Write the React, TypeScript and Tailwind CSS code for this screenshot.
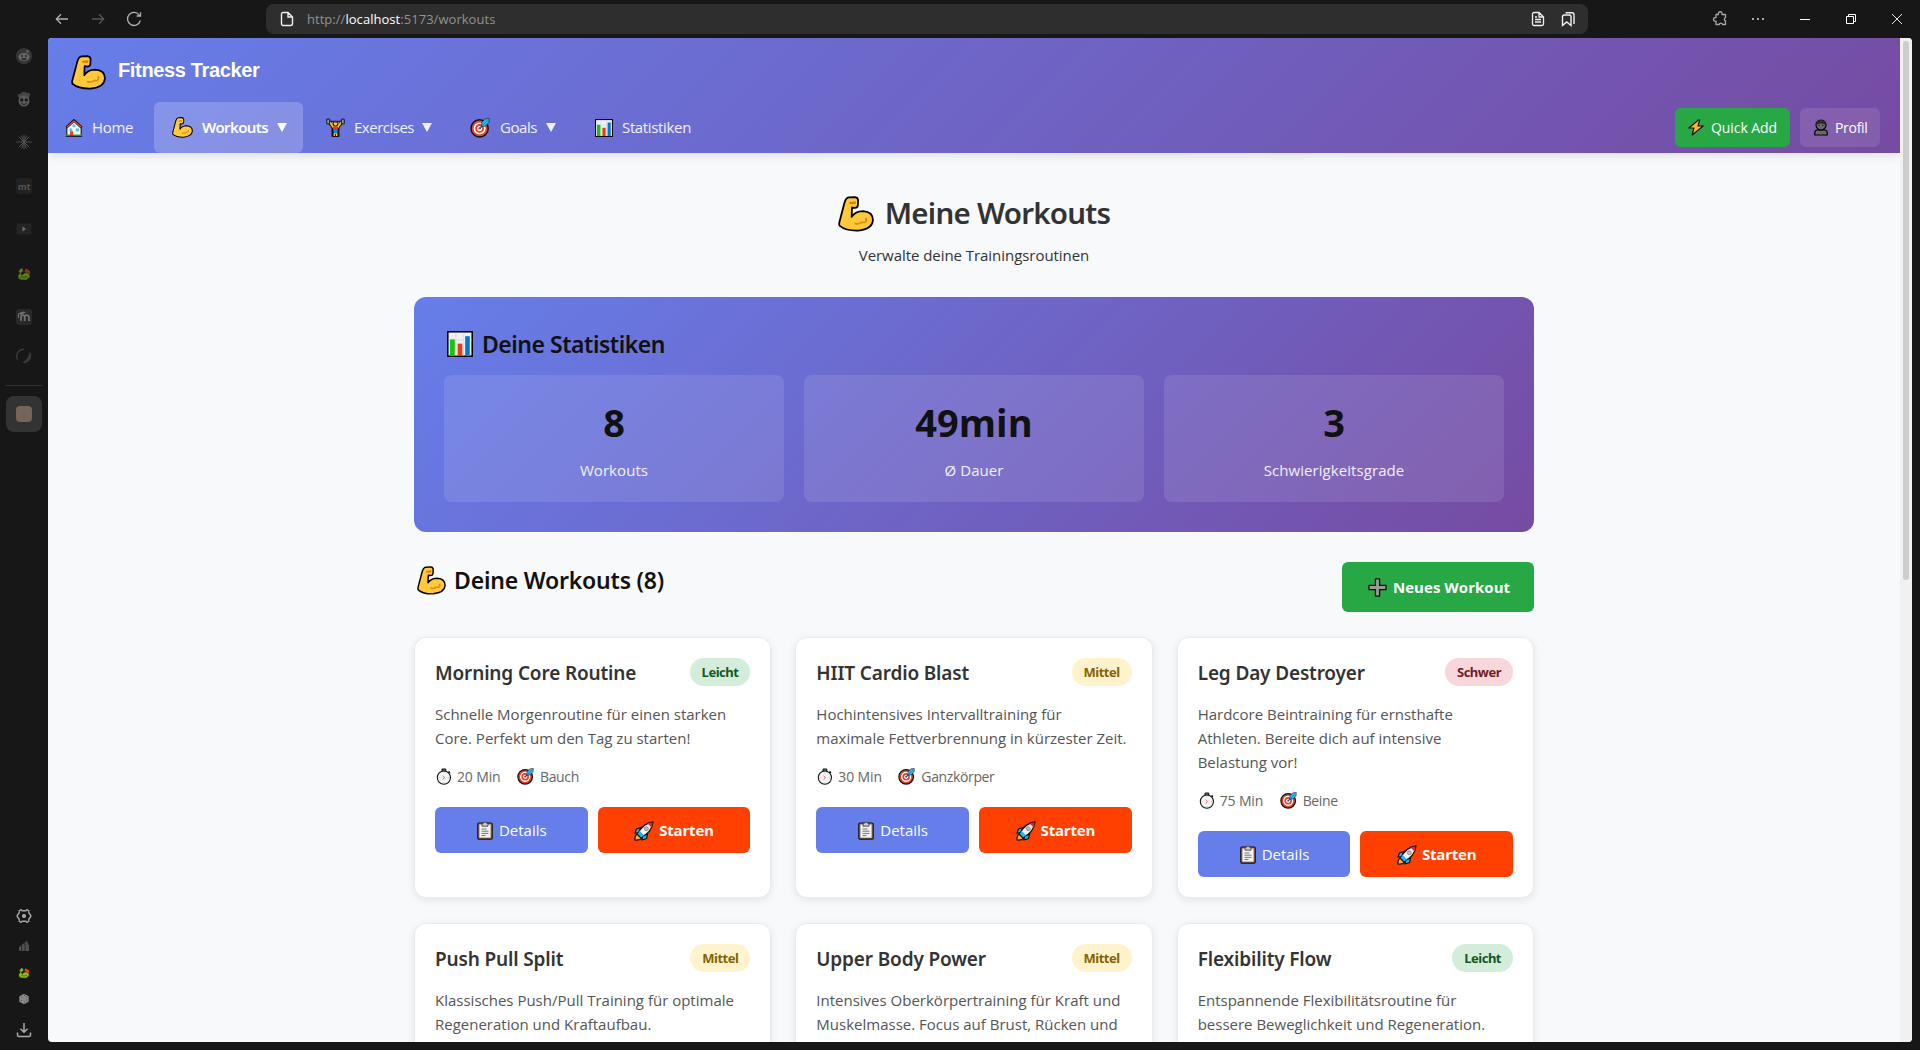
import type { ReactNode } from "react";

type IconProps = { className?: string };

const Arm = ({ className = "" }: IconProps) => (
  <svg viewBox="0 0 100 100" className={className}>
    <path d="M30 4 L47 3 Q56 4 56 13 L55 27 Q54 33 47 33 L39 32 L38 58 Q48 42 70 42 Q97 44 97 67 Q95 92 56 96 Q22 97 5 83 Q2 80 4 72 L18 19 Q22 5 30 4Z" fill="#ffc83d" stroke="#000" strokeWidth="5" strokeLinejoin="round" />
    <path d="M31 17 L50 15 L49 22 L33 22Z" fill="#d67d00" />
    <path d="M46 76 Q58 80 66 73 L75 73 Q81 69 77 61" fill="none" stroke="#e08f0a" strokeWidth="5" />
  </svg>
);

const House = ({ className = "" }: IconProps) => (
  <svg viewBox="0 0 20 20" className={className}>
    <path d="M2 18.5V9L10 1.5 18 9v9.5z" fill="#f5f5f5" stroke="#111" strokeWidth="1.2" />
    <path d="M1.5 9.500 10 1.800l8.500 7.700" fill="none" stroke="#111" strokeWidth="3" />
    <path d="M2 9.200 10 2.200l8 7" fill="none" stroke="#e8503a" strokeWidth="1.400" />
    <path d="M8.500 6h3v3h-3zM5 10.500h3v3H5zM12 10.500h3.500v3H12z" fill="#4cc2f1" />
    <path d="M5.500 13.500h3.500v5H5.500z" fill="#e8402a" />
    <path d="M1 17.200h4.500v1.800H1zM9 17.200h10v1.800H9z" fill="#2ba62b" />
    <path d="M.8 19.300h18.400" stroke="#111" strokeWidth="1" />
  </svg>
);

const Lifter = ({ className = "" }: IconProps) => (
  <svg viewBox="0 0 20 20" className={className}>
    <path d="M3 3.500h14" stroke="#222" strokeWidth="1.200" />
    <path d="M4 5 7.500 10v8.500h5V10L16 5" fill="#ffc83d" stroke="#111" strokeWidth="3.400" strokeLinejoin="round" />
    <path d="M4 4.500 8 10h4l4-5.500" fill="none" stroke="#ffc83d" strokeWidth="2" />
    <path d="M.8 1.200h3v5h-3zM16.200 1.200h3v5h-3z" fill="#8d99a3" stroke="#111" strokeWidth="1" />
    <path d="M7.200 9h5.600l-.8 5H8z" fill="#e8352a" />
    <path d="M8 12.500h4V16H8z" fill="#1783d6" />
    <path d="M8 16h1.500v3H8zM10.500 16H12v3h-1.500z" fill="#ffc83d" />
    <circle cx="10" cy="6" r="2.400" fill="#ffc83d" stroke="#111" strokeWidth="1" />
    <path d="M7.800 5q2.200-3 4.400 0z" fill="#8a4a1c" />
  </svg>
);

const Target = ({ className = "" }: IconProps) => (
  <svg viewBox="0 0 20 20" className={className}>
    <circle cx="9.600" cy="10.400" r="8.600" fill="#e8412a" stroke="#111" strokeWidth="1.400" />
    <circle cx="9.600" cy="10.400" r="6" fill="#fff" />
    <circle cx="9.600" cy="10.400" r="4.400" fill="#e8412a" />
    <circle cx="9.600" cy="10.400" r="2.500" fill="#fff" />
    <circle cx="9.600" cy="10.400" r="1.200" fill="#e8412a" />
    <path d="m9.600 10.400 4-4" stroke="#0f5a96" strokeWidth="1.400" />
    <path d="m11.500 8.500.3-4.300L15.500.8l3.700-.2-.2 3.700-3.700 3.900z" fill="#2cb8ee" stroke="#111" strokeWidth=".6" />
    <path d="m12 8 5.500-5.500" stroke="#0f76bd" strokeWidth=".8" />
  </svg>
);

const Chart = ({ className = "" }: IconProps) => (
  <svg viewBox="0 0 20 20" className={className}>
    <rect x=".6" y=".6" width="18.800" height="18.800" fill="#f0f0f2" stroke="#000" strokeWidth="1.200" />
    <path d="M6.800 1.400v17.400M12.800 1.400v17.400M1.400 7h17.400" stroke="#dcdce2" strokeWidth=".8" />
    <path d="M2.200 6.500h3.800v12.300H2.200z" fill="#16c60c" />
    <path d="M8.200 9.700h3.600v9.100H8.200z" fill="#f03a17" />
    <path d="M14 4h3.500v14.800H14z" fill="#0078d7" />
  </svg>
);

const Bolt = ({ className = "" }: IconProps) => (
  <svg viewBox="0 0 16 17" className={className}>
    <path d="M10.500 1 .9 9h5L4.200 16l11-9H10l1.700-6z" fill="#ffb52e" stroke="#111" strokeWidth="1.200" strokeLinejoin="round" />
  </svg>
);

const Person = ({ className = "" }: IconProps) => (
  <svg viewBox="0 0 14 17" className={className}>
    <path d="M.8 16v-2.500q0-2.200 2.500-2.500h7.400q2.500.3 2.500 2.500V16z" fill="#6b6b6b" stroke="#000" strokeWidth="1.200" />
    <circle cx="7" cy="6" r="5" fill="#6b6b6b" stroke="#000" strokeWidth="1.200" />
    <path d="M2 6Q2 1 7 1t5 5Q7 3 2 6z" fill="#2b2b2b" />
    <path d="M4.500 6.500h1.500M8 6.500h1.500" stroke="#222" strokeWidth=".9" />
  </svg>
);

const Plus = ({ className = "" }: IconProps) => (
  <svg viewBox="0 0 20 20" className={className}>
    <path d="M7.800 1h4.400v6.800H19v4.400h-6.800V19H7.800v-6.800H1V7.800h6.800z" fill="#9b9b9b" stroke="#111" strokeWidth="1.400" strokeLinejoin="round" />
  </svg>
);

const Clipboard = ({ className = "" }: IconProps) => (
  <svg viewBox="0 0 16 19" className={className}>
    <rect x=".8" y="2" width="14.400" height="16.200" rx="1.200" fill="#a07a5a" stroke="#111" strokeWidth="1.200" />
    <path d="M2.500 3.600h11v13h-11z" fill="#f3f3f3" />
    <path d="M5 2.200h1.500Q8-.8 9.500 2.200H11v3H5z" fill="#c9c9c9" stroke="#333" strokeWidth=".8" />
    <path d="M4.500 8h5M4.500 10.200h7M4.500 12.400h7M4.500 14.500h4" stroke="#666" strokeWidth=".9" />
  </svg>
);

const Rocket = ({ className = "" }: IconProps) => (
  <svg viewBox="0 0 20 20" className={className}>
    <path d="M1 19q-.5-4 2-6l4.500 4.500q-2 2-6.500 1.500z" fill="#ffab2e" stroke="#111" strokeWidth="1.200" />
    <path d="M7 6.500 2.500 8 1 12l4-.5zM13.500 13 12.500 17.500 8 19l.5-4z" fill="#22b4f0" stroke="#111" strokeWidth="1.200" />
    <path d="M3.800 13Q8 2.500 19 1 17.500 12 7 16.200z" fill="#f2f2f2" stroke="#111" strokeWidth="1.300" strokeLinejoin="round" />
    <path d="M13.600 2.600Q16 1.500 18.500 1.500 18.400 4 17.400 6.400z" fill="#e0262e" />
    <path d="m3.800 13 1.700-3.200 4.700 4.700L7 16.200z" fill="#22b4f0" />
    <circle cx="12.300" cy="7.700" r="2" fill="#b9bec4" stroke="#777" strokeWidth=".7" />
  </svg>
);

const Stopwatch = ({ className = "" }: IconProps) => (
  <svg viewBox="0 0 16 17" className={className}>
    <path d="M6 1h3.800v3H6z" fill="#777" stroke="#111" strokeWidth="1" />
    <path d="m12.500 3.500 1.400 1.400" stroke="#111" strokeWidth="1.600" />
    <circle cx="7.900" cy="9.600" r="6.600" fill="#f3f3f3" stroke="#111" strokeWidth="1.100" />
    <path d="m6.600 7.800 2 1.900-2 1.900" fill="none" stroke="#e0555a" strokeWidth=".9" />
    <path d="M7.900 4.500v1M7.900 13.900v1M3 9.700h1M12 9.700h1" stroke="#bbb" strokeWidth=".8" />
  </svg>
);

const Dragon = ({ className = "" }: IconProps) => (
  <svg viewBox="0 0 14 14" className={className}>
    <path d="m7.500 5 1-3.500 2 .8 2.700 2.200-.4 3.500-3-1z" fill="#e0421a" />
    <path d="M1.300 4.200 3 2.200l1-1.200 2 .8.300 2.800-1.800.8-.6 1.800 1.100.7L7.500 6l2.200-.3 2.500 1.500 1 2.300-1.400 1.800L9.500 13 4 12.900 1.300 11.600.8 8.800 2 7.400l.7-2.200z" fill="#8dbf1e" stroke="#1e2c08" strokeWidth=".6" />
    <path d="m3.500 10.800 1.700-1.300 1.800 1.500L9 9.300l1.800 1" fill="none" stroke="#2d4a0c" strokeWidth=".8" />
  </svg>
);

function TopBar() {
  return (
    <div className="flex h-[38px] shrink-0 items-center text-[#b8b8b8]">
      <svg viewBox="0 0 14 12" className="ml-[55px] h-3 w-3.5" fill="none" stroke="#b0b0b0" strokeWidth="1.300">
        <path d="M13 6H1.500M6 1.300 1.300 6 6 10.700" />
      </svg>
      <svg viewBox="0 0 14 12" className="ml-[22px] h-3 w-3.5" fill="none" stroke="#575757" strokeWidth="1.300">
        <path d="M1 6h11.500M8 1.300 12.700 6 8 10.700" />
      </svg>
      <svg viewBox="0 0 16 16" className="ml-[21px] h-4 w-4" fill="none" stroke="#b0b0b0" strokeWidth="1.300">
        <path d="M14.300 9.500A6.500 6.500 0 1 1 13.500 4.500M14.500 1.200v3.800h-3.900" />
      </svg>
      <div className="ml-[124px] flex h-[30px] w-[1322px] items-center rounded-lg bg-[#2e2e2e]">
        <svg viewBox="0 0 14 16" className="ml-3.5 h-4 w-3.5" fill="none" stroke="#f0f0f0" strokeWidth="1.400">
          <path d="M3 1.500h5L12.500 6v6.500a2 2 0 0 1-2 2H3a1.500 1.500 0 0 1-1.500-1.500V3A1.500 1.500 0 0 1 3 1.500zM8 1.500V6h4.500" />
        </svg>
        <span className="mt-0.5 ml-[13px] text-[13px] tracking-[0.04px] whitespace-nowrap text-[#929292]">
          http://<span className="text-white">localhost</span>:5173/workouts
        </span>
        <svg viewBox="0 0 14 16" className="ml-auto h-4 w-3.5" fill="none" stroke="#f0f0f0" strokeWidth="1.300">
          <path d="M3 1.500h5L12.500 6v7a1.500 1.500 0 0 1-1.500 1.500H3A1.500 1.500 0 0 1 1.500 13V3A1.500 1.500 0 0 1 3 1.500zM8 1.500V6h4.500M4 6h2M4 8.500h6M4 11h6" />
        </svg>
        <svg viewBox="0 0 15 16" className="mr-3 ml-4 h-4 w-[15px]" fill="none" stroke="#f0f0f0" strokeWidth="1.400">
          <path d="M1.500 14.500v-9A1.500 1.500 0 0 1 3 4h5.500A1.500 1.500 0 0 1 10 5.500v9L5.700 11zM4.500 1.700H11A2 2 0 0 1 13 3.700v9.300" />
        </svg>
      </div>
      <svg viewBox="0 0 16 16" className="ml-[124px] h-4 w-4" fill="none" stroke="#a8a8a8" strokeWidth="1.300" strokeLinejoin="round">
        <path d="M4 3.500H6.500a1.900 1.900 0 1 1 3.400 0H13.500v3.200a1.600 1.600 0 0 0 0 3.100v3.700h-3a1.700 1.700 0 0 0-3.300 0H4V10.200a1.900 1.900 0 1 1 0-3.600z" />
      </svg>
      <div className="ml-6 flex gap-[3px]">
        <i className="size-0.5 bg-[#a8a8a8]" />
        <i className="size-0.5 bg-[#a8a8a8]" />
        <i className="size-0.5 bg-[#a8a8a8]" />
      </div>
      <div className="ml-9 h-px w-2.5 bg-white" />
      <svg viewBox="0 0 10 10" className="ml-9 size-2.5" fill="none" stroke="#fff" strokeWidth="1">
        <path d="M.5 2.500h7v7h-7zM2.500 2.500v-2h7v7h-2" />
      </svg>
      <svg viewBox="0 0 10 10" className="ml-9 size-2.5" fill="none" stroke="#fff" strokeWidth=".9">
        <path d="m0 0 10 10M10 0 0 10" />
      </svg>
    </div>
  );
}

const Cell = ({ children, className = "" }: { children: ReactNode; className?: string }) => (
  <div className={`flex h-9 w-9 shrink-0 items-center justify-center ${className}`}>{children}</div>
);

function SideBar() {
  return (
    <div className="flex w-12 shrink-0 flex-col items-center pb-px">
      <Cell>
        <svg viewBox="0 0 16 16" className="size-4">
          <circle cx="8" cy="8" r="8" fill="#363636" />
          <circle cx="11.500" cy="3.500" r="1.300" fill="#686868" />
          <ellipse cx="8" cy="9" rx="5.500" ry="4" fill="#686868" />
          <path d="M5 8h2M9 8h2M5.500 10.500q2.500 2 5 0" stroke="#222" strokeWidth="1.300" />
        </svg>
      </Cell>
      <Cell className="mt-[7px]">
        <svg viewBox="0 0 16 16" className="size-4">
          <path d="M3 7Q0 3 4 3q3-4 7-1 5-1 2 5z" fill="#454545" />
          <circle cx="8" cy="10" r="5.500" fill="#5c5c5c" />
          <circle cx="5.700" cy="9" r="1.700" fill="#1b1b1b" />
          <circle cx="10.300" cy="9" r="1.700" fill="#1b1b1b" />
          <path d="M5.500 12.500q2.500 2 5 0" stroke="#1b1b1b" fill="none" />
        </svg>
      </Cell>
      <Cell className="mt-[7px]">
        <svg viewBox="0 0 16 16" className="size-4" stroke="#505050" strokeWidth="1">
          <path d="M8 .5v15M.5 8h15M2.700 2.700l10.600 10.600M13.300 2.700 2.700 13.300M5.500 1.500l5 13M10.500 1.500l-5 13" />
        </svg>
      </Cell>
      <Cell className="mt-[8px]">
        <div className="flex size-4 items-center justify-center rounded-[3px] bg-[#222] text-[9px] leading-none font-bold text-[#555]">mt</div>
      </Cell>
      <Cell className="mt-[7px]">
        <svg viewBox="0 0 16 12" className="h-3 w-4">
          <rect x=".5" y=".5" width="15" height="11" rx="2" fill="#242424" />
          <path d="M6.500 3.500 10 6 6.500 8.500z" fill="#707070" />
        </svg>
      </Cell>
      <Cell className="mt-[9px]">
        <Dragon className="size-3.5 opacity-60" />
      </Cell>
      <Cell className="mt-[7px]">
        <svg viewBox="0 0 16 16" className="size-4" fill="none">
          <rect width="16" height="16" rx="3" fill="#292929" />
          <path d="M5 12V8q0-1.800 1.800-1.800T8.700 8v4M8.700 8q0-1.800 2-1.800T13 8v4" stroke="#727272" strokeWidth="1.700" />
          <path d="M1.500 4.800 7 2.500l3 .8-4.500 2.500zM2 5h1v4H2z" fill="#727272" />
        </svg>
      </Cell>
      <Cell className="mt-[3px]">
        <svg viewBox="0 0 16 16" className="size-4">
          <path d="M1.500 11.500A7 7 0 0 1 8 1.300" stroke="#3a3a3a" strokeWidth="1.500" fill="none" />
          <path d="M14 3.500Q17 9 12.500 13.500 9.500 16 6.500 14.700 12 11.500 14 3.500z" fill="#3a3a3a" />
        </svg>
      </Cell>
      <div className="mt-[11px] h-px w-9 shrink-0 bg-[#333]" />
      <Cell className="mt-2.5 rounded-lg bg-[#333]">
        <div className="size-4 rounded bg-[#776459]" />
      </Cell>
      <svg viewBox="0 0 16 16" className="mt-auto size-4 shrink-0" fill="none" stroke="#a8a8a8" strokeWidth="1.400" strokeLinejoin="round">
        <path d="M4.800 1.700 6.500 2.800h3L11.200 1.700l1.500 1.100.2 2.200 1.900 2.500v1l-1.900 2.500-.2 2.200-1.500 1.100-1.700-1.100h-3l-1.700 1.100-1.500-1.100-.2-2.200L1.200 8.500v-1l1.900-2.500.2-2.200z" />
        <circle cx="8" cy="8" r="1.400" fill="#a8a8a8" />
      </svg>
      <svg viewBox="0 0 12 12" className="mt-4 size-3 shrink-0">
        <path d="M1 11V7l2-1.500v5.500zM3.700 11V5l3-2.500V11zM7.400 11V1l2.200 1 1.400 4v5z" fill="#505050" />
      </svg>
      <Dragon className="mt-[15px] size-3 shrink-0" />
      <svg viewBox="0 0 12 12" className="mt-3.5 size-3 shrink-0">
        <path d="m6 .8 4.700 2.500v5.400L6 11.200 1.300 8.700V3.300z" fill="#888" />
        <path d="M3.500 4h.8M6 2.500h.8M8 4h.8M3 7.500h.8M8.500 7h.8M6 9h.8" stroke="#3c3c3c" strokeWidth=".9" />
      </svg>
      <svg viewBox="0 0 16 16" className="mt-[17px] mb-[11px] size-4 shrink-0" fill="none" stroke="#a8a8a8" strokeWidth="1.500">
        <path d="M8 1v9M4.500 6.800 8 10.300l3.500-3.500M1.500 10.500V13A1.500 1.500 0 0 0 3 14.500h10a1.500 1.500 0 0 0 1.500-1.500v-2.500" />
      </svg>
    </div>
  );
}

const Caret = () => <i className="h-[9px] w-2.5 bg-current [clip-path:polygon(0_0,100%_0,50%_100%)]" />;

function Header() {
  return (
    <header className="relative z-10 h-[115px] shrink-0 bg-[linear-gradient(135deg,#667eea_0%,#764ba2_100%)] text-[15px] whitespace-nowrap text-white/90 shadow-[0_2px_10px_rgba(0,0,0,0.12)]">
      <div className="flex h-16 items-center pt-0.5 pl-[23px]">
        <Arm className="mt-0.5 size-[35px]" />
        <span className="mb-[3px] ml-3 font-['Liberation_Sans',sans-serif] text-[20px] font-bold tracking-[-0.35px] text-white">Fitness Tracker</span>
      </div>
      <nav className="flex h-[51px] items-center">
        <House className="ml-[17px] size-[18px]" />
        <span className="ml-[9px] w-[41px] tracking-[-0.35px]">Home</span>
        <div className="ml-[21px] flex h-full w-[149px] items-center rounded-md bg-white/20 pl-[18px] text-white">
          <Arm className="size-[21px]" />
          <span className="ml-[9px] w-[66px] font-['Noto_Sans',sans-serif] font-semibold tracking-[-0.6px]">Workouts</span>
          <span className="ml-[9px] flex"><Caret /></span>
        </div>
        <Lifter className="ml-[23px] size-[19px]" />
        <span className="ml-[9px] w-[60px] tracking-[-0.49px]">Exercises</span>
        <span className="ml-2 flex"><Caret /></span>
        <Target className="ml-[38px] size-5" />
        <span className="ml-[10px] w-[37px] tracking-[-0.44px]">Goals</span>
        <span className="ml-[9px] flex"><Caret /></span>
        <Chart className="ml-[39px] size-[18px]" />
        <span className="ml-[9px] tracking-[-0.35px]">Statistiken</span>
        <div className="ml-auto flex h-[39px] w-[115px] items-center rounded-md bg-[#28a745] pl-[13px] text-sm text-white">
          <Bolt className="h-[17px] w-4" />
          <span className="ml-[7px] tracking-[-0.08px]">Quick Add</span>
        </div>
        <div className="mr-5 ml-2.5 flex h-[39px] w-20 items-center rounded-md bg-white/10 pl-3.5 text-sm text-white">
          <Person className="h-[17px] w-3.5" />
          <span className="ml-[7px] tracking-[-0.31px]">Profil</span>
        </div>
      </nav>
    </header>
  );
}

const stats = [
  { value: "8", label: "Workouts" },
  { value: "49min", label: "Ø Dauer" },
  { value: "3", label: "Schwierigkeitsgrade" },
];

function Stats() {
  return (
    <section className="mt-[30px] h-[235px] rounded-xl bg-[linear-gradient(135deg,#667eea_0%,#764ba2_100%)] p-[30px]">
      <h2 className="flex h-[34px] items-center text-[#111]">
        <Chart className="ml-[3px] size-[26px]" />
        <span className="ml-[9px] font-['Noto_Sans',sans-serif] text-[23px] font-semibold tracking-[-0.48px]">Deine Statistiken</span>
      </h2>
      <div className="mt-3.5 grid grid-cols-3 gap-5">
        {stats.map((s) => (
          <div key={s.label} className="h-[127px] rounded-lg bg-white/10 pt-5 text-center">
            <div className="h-[55px] text-[38px] leading-[55px] font-bold text-[#111]">{s.value}</div>
            <div className="mt-2 text-[15px] leading-6 tracking-[0.07px] text-white/90">{s.label}</div>
          </div>
        ))}
      </div>
    </section>
  );
}

const badgeStyles = {
  Leicht: "bg-[#d4edda] text-[#155724]",
  Mittel: "bg-[#fff3cd] text-[#856404]",
  Schwer: "bg-[#f8d7da] text-[#721c24]",
};

type Workout = { title: string; level: keyof typeof badgeStyles; lines: string[]; time: string; focus: string };

const workouts: Workout[] = [
  { title: "Morning Core Routine", level: "Leicht", lines: ["Schnelle Morgenroutine für einen starken", "Core. Perfekt um den Tag zu starten!"], time: "20 Min", focus: "Bauch" },
  { title: "HIIT Cardio Blast", level: "Mittel", lines: ["Hochintensives Intervalltraining für", "maximale Fettverbrennung in kürzester Zeit."], time: "30 Min", focus: "Ganzkörper" },
  { title: "Leg Day Destroyer", level: "Schwer", lines: ["Hardcore Beintraining für ernsthafte", "Athleten. Bereite dich auf intensive", "Belastung vor!"], time: "75 Min", focus: "Beine" },
];

const nextWorkouts: Omit<Workout, "time" | "focus">[] = [
  { title: "Push Pull Split", level: "Mittel", lines: ["Klassisches Push/Pull Training für optimale", "Regeneration und Kraftaufbau."] },
  { title: "Upper Body Power", level: "Mittel", lines: ["Intensives Oberkörpertraining für Kraft und", "Muskelmasse. Focus auf Brust, Rücken und"] },
  { title: "Flexibility Flow", level: "Leicht", lines: ["Entspannende Flexibilitätsroutine für", "bessere Beweglichkeit und Regeneration."] },
];

function Card({ title, level, lines, time, focus }: Omit<Workout, "time" | "focus"> & { time?: string; focus?: string }) {
  return (
    <article className="h-[261px] rounded-xl border border-[#e9ecef] bg-white p-5 whitespace-nowrap shadow-[0_2px_8px_rgba(0,0,0,0.09)]">
      <div className="flex h-7 items-center justify-between">
        <h3 className="mt-[3px] font-['Noto_Sans',sans-serif] text-[19px] font-semibold tracking-[-0.15px] text-[#333]">{title}</h3>
        <span className={`flex h-7 items-center rounded-full px-3 pt-px font-['Noto_Sans',sans-serif] text-[13px] font-bold tracking-[-0.5px] ${badgeStyles[level]}`}>{level}</span>
      </div>
      <div className="mt-4 text-[15px] leading-6 text-[#555]">
        {lines.map((l) => (
          <p key={l}>{l}</p>
        ))}
      </div>
      {time && (
        <>
          <div className="mt-4 flex h-[21px] items-center pl-px text-sm text-[#666]">
            <Stopwatch className="h-[17px] w-4" />
            <span className="ml-[5px] w-[44px] tracking-[-0.14px]">{time}</span>
            <Target className="ml-4 size-[17px]" />
            <span className="ml-1.5 tracking-[-0.36px]">{focus}</span>
          </div>
          <div className="mt-5 grid grid-cols-2 gap-2.5 text-[15px] text-white">
            <div className="flex h-[46px] items-center justify-center rounded-md bg-[#667eea] pt-px pl-px">
              <Clipboard className="h-[19px] w-4" />
              <span className="ml-1.5">Details</span>
            </div>
            <div className="flex h-[46px] items-center justify-center rounded-md bg-[#ff4000] pt-px">
              <Rocket className="size-5" />
              <span className="ml-[5px] font-bold tracking-[-0.2px]">Starten</span>
            </div>
          </div>
        </>
      )}
    </article>
  );
}

export default function App() {
  return (
    <div className="flex h-[1050px] w-[1920px] flex-col overflow-hidden bg-[#171717] font-['Open_Sans','Noto_Sans',sans-serif]">
      <TopBar />
      <div className="flex min-h-0 flex-1">
        <SideBar />
        <div className="mb-2 flex w-[1864px] overflow-hidden rounded-[4px] bg-[#f8f9fb]">
          <div className="flex w-[1852px] shrink-0 flex-col overflow-hidden">
            <Header />
            <main className="mx-auto w-[1120px] pt-10 whitespace-nowrap">
              <h1 className="flex h-10 items-center justify-center text-[#333]">
                <Arm className="mt-0.5 size-9" />
                <span className="ml-[11px] font-['Noto_Sans',sans-serif] text-[29.5px] leading-10 font-semibold tracking-[-0.75px]">Meine Workouts</span>
              </h1>
              <p className="mt-2.5 text-center text-[15px] leading-6 tracking-[-0.05px] text-[#333]">Verwalte deine Trainingsroutinen</p>
              <Stats />
              <div className="mt-[30px] flex h-[50px] items-start justify-between">
                <h2 className="flex h-9 items-center text-[#111]">
                  <Arm className="ml-[3px] size-[29px]" />
                  <span className="ml-2 font-['Noto_Sans',sans-serif] text-[23px] font-semibold tracking-[-0.2px]">Deine Workouts (8)</span>
                </h2>
                <div className="flex h-[50px] w-48 items-center rounded-md bg-[#28a745] pt-px pl-[26px] text-[15px] font-bold text-white">
                  <Plus className="size-[19px]" />
                  <span className="ml-1.5 tracking-[0.03px]">Neues Workout</span>
                </div>
              </div>
              <div className="mt-[25px] grid grid-cols-3 gap-x-6 gap-y-[25px]">
                {workouts.map((w) => (
                  <Card key={w.title} {...w} />
                ))}
                {nextWorkouts.map((w) => (
                  <Card key={w.title} {...w} />
                ))}
              </div>
            </main>
          </div>
          <div className="w-3 shrink-0 bg-[#f1f1f1] pt-[3px] pl-[3px]">
            <div className="h-[539px] w-1.5 rounded-full bg-[#cdcdcd]" />
          </div>
        </div>
      </div>
    </div>
  );
}
